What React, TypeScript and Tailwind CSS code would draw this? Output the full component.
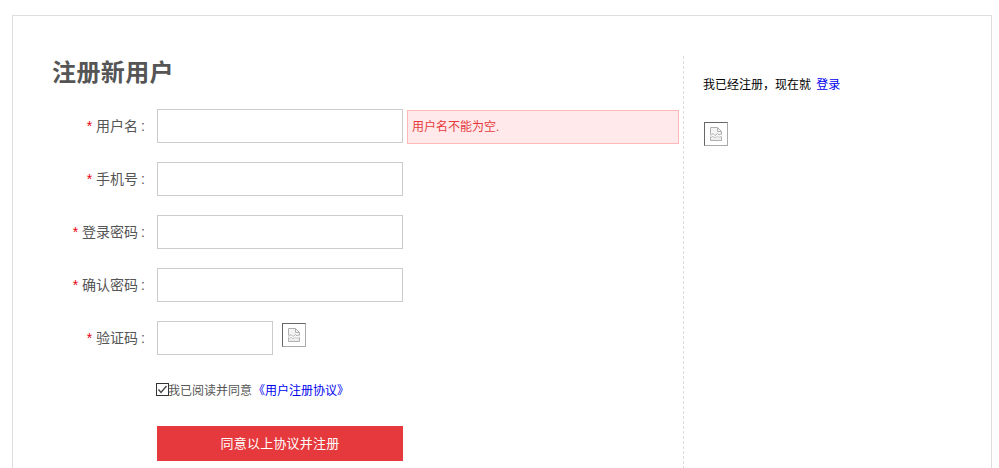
const fontStack = { fontFamily: '"Liberation Sans", "Noto Sans CJK SC", sans-serif' };

function BrokenImage() {
  return (
    <span className="block h-6 w-6 border border-t-[#666] border-l-[#666] border-r-[#aaa] border-b-[#aaa] bg-white p-[3px]">
      <svg width="16" height="16" viewBox="0 0 16 16" fill="none" stroke="#b0b0b0" strokeWidth="1">
        <path d="M2.5 8.5V1.5H9.5L13.5 5.5V8.5" fill="#f4f4f4" />
        <path d="M9.5 1.5V5.5H13.5" />
        <path d="M2.5 10.5V14.5H13.5V10.5" fill="#eeeeee" />
        <path d="M2.5 9.5L5 7.5L7 9.5L9.5 7.5L11 9L13.5 7.5" />
        <path d="M2.5 12L5 10L7 12L9.5 10L11 11.5L13.5 10" stroke="#c8c8c8" />
      </svg>
    </span>
  );
}

function Label({ text }: { text: string }) {
  return (
    <label className="w-[104px] shrink-0 pr-[12px] text-right text-[14px] text-[#555]">
      <span className="text-[#e60012]">*</span> {text}
      <span className="ml-[3px]">:</span>
    </label>
  );
}

function Input({ width = 'w-[246px]' }: { width?: string }) {
  return <input type="text" className={`h-[34px] ${width} shrink-0 border border-[#ccc] bg-white`} />;
}

export default function App() {
  return (
    <div className="h-[468px] w-[999px] overflow-hidden bg-white pl-[12px] pt-[15px]" style={fontStack}>
      <div className="flex h-[600px] w-[980px] border border-[#ddd] pt-[40px]">
        <div className="w-[671px] shrink-0 border-r border-dashed border-[#ddd] pl-[40px]">
          <h1 className="-ml-[1px] mb-[16px] mt-[2px] h-[35px] text-[24px] leading-[30px] font-bold tracking-[0.4px] text-[#555]">注册新用户</h1>

          <div className="flex flex-col gap-[19px]">
            <div className="flex h-[34px] items-center">
              <Label text="用户名" />
              <Input />
              <div className="ml-[4px] mt-[2px] flex h-[34px] w-[272px] items-center border border-[#ffb8b8] bg-[#ffe9ea] pl-[4px] text-[12px] text-[#e6393d]">
                用户名不能为空.
              </div>
            </div>
            <div className="flex h-[34px] items-center">
              <Label text="手机号" />
              <Input />
            </div>
            <div className="flex h-[34px] items-center">
              <Label text="登录密码" />
              <Input />
            </div>
            <div className="flex h-[34px] items-center">
              <Label text="确认密码" />
              <Input />
            </div>
            <div className="flex h-[34px] items-center">
              <Label text="验证码" />
              <Input width="w-[116px]" />
              <div className="mb-[6px] ml-[9px]">
                <BrokenImage />
              </div>
            </div>
          </div>

          <div className="ml-[103px] mt-[28px] flex h-[16px] items-center text-[12px] text-[#555]">
            <span className="mb-[3px] flex h-[13px] w-[13px] shrink-0 items-center justify-center border border-[#333] bg-white">
              <svg width="11" height="11" viewBox="0 0 11 11" fill="none" stroke="#444" strokeWidth="1.4">
                <path d="M1.5 5.5L4 8.5L9.5 2" />
              </svg>
            </span>
            <span className="ml-[-1px]">我已阅读并同意</span>
            <a href="#" className="ml-[1px] text-[#0000ee]">《用户注册协议》</a>
          </div>

          <button className="ml-[104px] mt-[27px] block h-[35px] w-[246px] bg-[#e6393d] text-[13px] tracking-[0.2px] text-white">
            同意以上协议并注册
          </button>
        </div>

        <div className="pl-[19px]">
          <p className="mt-[20px] text-[12px] leading-[18px] text-black">
            {'我已经注册\uFF0C现在就 '}<a href="#" className="ml-[2px] text-[#0000ee]">登录</a>
          </p>
          <div className="ml-[1px] mt-[28px]">
            <BrokenImage />
          </div>
        </div>
      </div>
    </div>
  );
}
